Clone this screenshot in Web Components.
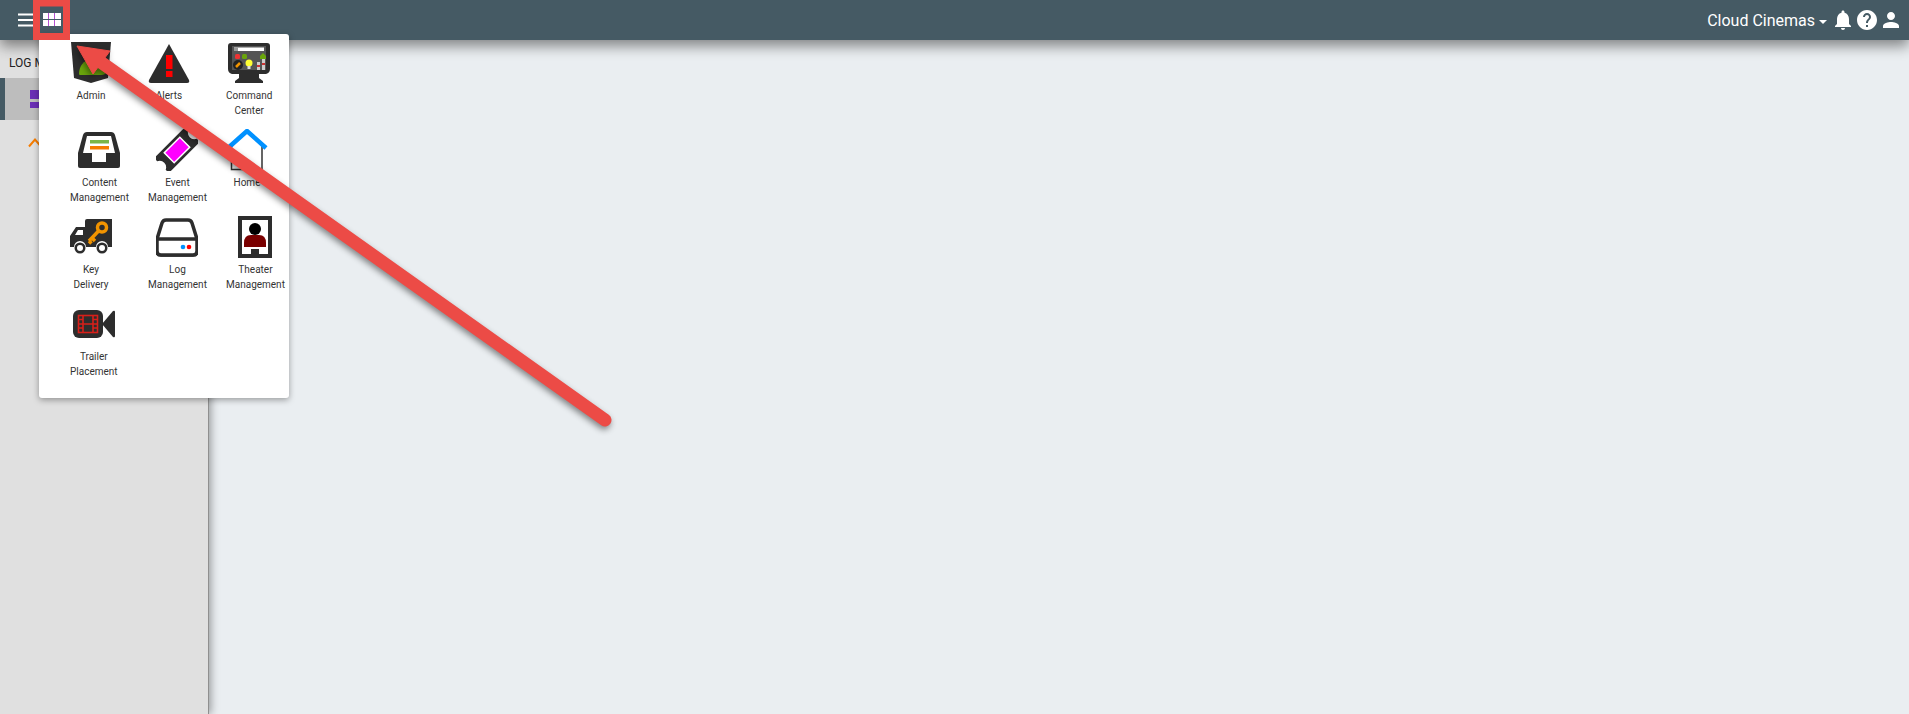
<!DOCTYPE html>
<html>
<head>
<meta charset="utf-8">
<title>Log Management</title>
<style>
  html, body { margin: 0; height: 100%; overflow: hidden; background: #eaeef1; font-family: Roboto, "Liberation Sans", sans-serif; }
</style>
</head>
<body>
<app-shell>
  <app-topbar slot="top" account="Cloud Cinemas"></app-topbar>
  <app-sidebar slot="side" heading="Log Management"></app-sidebar>
  <app-launcher slot="over">
    <launcher-item icon="admin">Admin</launcher-item>
    <launcher-item icon="alerts">Alerts</launcher-item>
    <launcher-item icon="command">Command<br>Center</launcher-item>
    <launcher-item icon="content">Content<br>Management</launcher-item>
    <launcher-item icon="event">Event<br>Management</launcher-item>
    <launcher-item icon="home">Home</launcher-item>
    <launcher-item icon="key">Key<br>Delivery</launcher-item>
    <launcher-item icon="log">Log<br>Management</launcher-item>
    <launcher-item icon="theater">Theater<br>Management</launcher-item>
    <launcher-item icon="trailer">Trailer<br>Placement</launcher-item>
  </app-launcher>
  <callout-arrow slot="over"></callout-arrow>
</app-shell>

<script>
// all launcher icons share a 42x42 box
const ICONS = {
  admin: `
    <path d="M1 0H41L38 36L21 41L4 36Z" fill="#2d2d2d"/>
    <path d="M9 32C9 24 14 18 20 18C28 18 36 24 36 30C36 32 34 33 31 33H12C10 33 9 33 9 32Z" fill="#6aa50c"/>`,
  alerts: `
    <path d="M21 2L41 38Q42 41 39 41H3Q0 41 1 38Z" fill="#2d2d2d"/>
    <rect x="18" y="13" width="6.500" height="14" fill="#f00"/>
    <rect x="18" y="29" width="6.500" height="6" fill="#f00"/>`,
  command: `
    <path d="M3 1H39Q42 1 42 4V27Q42 31 38 32H31V36L35 39V41H7V39L11 36V32H4Q0 31 0 27V4Q0 1 3 1Z" fill="#2d2d2d"/>
    <rect x="4" y="4" width="34" height="24" fill="#555"/>
    <rect x="6" y="5.500" width="30" height="3.500" fill="#fff"/>
    <rect x="6" y="5.500" width="4" height="3.500" fill="#999"/>
    <rect x="7" y="12" width="5" height="5" rx="1.500" fill="#e33"/>
    <rect x="14" y="12" width="5" height="5" rx="1.500" fill="#6aa50c"/>
    <path d="M35 11L38 14V17H32V14Z" fill="#6aa50c"/>
    <circle cx="10" cy="23" r="5" fill="#222"/>
    <path d="M8 25L12 21" stroke="#f29400" stroke-width="2.500"/>
    <circle cx="21" cy="21" r="3.500" fill="#ff3"/>
    <rect x="19.500" y="24" width="3" height="3" fill="#ddd"/>
    <rect x="29" y="20" width="3" height="8" fill="#ccc"/>
    <rect x="34" y="17" width="3" height="11" fill="#ccc"/>
    <rect x="29" y="23" width="3" height="2" fill="#c33"/>
    <rect x="34" y="21" width="3" height="2" fill="#c33"/>`,
  content: `
    <path d="M9 3H33Q36 3 37 6L42 24V37Q42 39 40 39H2Q0 39 0 37V24L5 6Q6 3 9 3Z" fill="#2d2d2d"/>
    <path d="M9 7H33L37 24H28V33H14V24H5Z" fill="#fff"/>
    <rect x="12" y="11" width="19" height="3.500" fill="#7ab648"/>
    <rect x="12" y="17" width="19" height="3.500" fill="#f57c00"/>`,
  event: `
    <g transform="rotate(-45 21 21)">
      <path d="M-1 10.500H43V15Q39 17 39 21Q39 25 43 27V31.500H-1V27Q3 25 3 21Q3 17 -1 15Z" fill="#2d2d2d"/>
      <rect x="10" y="14" width="22" height="14" fill="#f0f" stroke="#fff" stroke-width="1.500"/>
    </g>`,
  home: `
    <path d="M5.500 17V40.500H36V17" fill="none" stroke="#333" stroke-width="1.500"/>
    <path d="M2 19L21 2L40 19" fill="none" stroke="#0091ff" stroke-width="4.500"/>`,
  key: `
    <path d="M17 3H42V31H38A6 6 0 0 0 26 31H16A6 6 0 0 0 4 31H0V20L6 11H15V5Q15 3 17 3Z" fill="#2d2d2d"/>
    <path d="M5 19L8 14H13V19Z" fill="#fff"/>
    <circle cx="10" cy="32" r="5.500" fill="#2d2d2d"/><circle cx="10" cy="32" r="3" fill="#fff"/>
    <circle cx="32" cy="32" r="5.500" fill="#2d2d2d"/><circle cx="32" cy="32" r="3" fill="#fff"/>
    <g fill="none" stroke="#f29400" stroke-width="3.500">
      <circle cx="32" cy="11.500" r="4.500"/>
      <path d="M28.500 15L19 25M22 22L25 25M19 25L21.500 27.500"/>
    </g>`,
  log: `
    <path d="M10 4H32Q35 4 36 7L41 23V35Q41 39 37 39H5Q1 39 1 35V23L6 7Q7 4 10 4Z" fill="none" stroke="#2d2d2d" stroke-width="3.500"/>
    <path d="M1 23H41V35Q41 39 37 39H5Q1 39 1 35Z" fill="#fff" stroke="#2d2d2d" stroke-width="3.500"/>
    <circle cx="27" cy="31" r="2.300" fill="#0091ff"/>
    <circle cx="33" cy="31" r="2.300" fill="#f00"/>`,
  theater: `
    <rect x="6" y="2" width="30" height="38" fill="#fff" stroke="#2d2d2d" stroke-width="4"/>
    <circle cx="21" cy="13" r="6" fill="#000"/>
    <path d="M10 27Q10 19 17 19H25Q32 19 32 27V31H10Z" fill="#7a0000"/>
    <rect x="17" y="33" width="8" height="6" fill="#2d2d2d"/>`,
  trailer: `
    <rect x="0" y="7" width="30" height="28" rx="6" fill="#2d2d2d"/>
    <path d="M29 21L40 8Q42 7 42 9V33Q42 35 40 34Z" fill="#2d2d2d"/>
    <g fill="none" stroke="#d8201a" stroke-width="1.600">
      <rect x="5.500" y="12.500" width="19" height="17"/>
      <path d="M10 12.500V29.500M20 12.500V29.500M10 21H20M5.500 16.500H10M5.500 21H10M5.500 25H10M20 16.500H24.500M20 21H24.500M20 25H24.500"/>
    </g>`
};

class AppShell extends HTMLElement {
  connectedCallback() {
    this.attachShadow({ mode: 'open' });
    this.shadowRoot.innerHTML = `
      <style>
        :host { display: block; position: relative; width: 1909px; height: 714px; overflow: hidden; }
        .frame { display: flex; flex-direction: column; height: 100%; }
        .body { flex: 1; display: flex; min-height: 0; }
        main { flex: 1; background: #eaeef1; }
      </style>
      <div class="frame">
        <slot name="top"></slot>
        <div class="body">
          <slot name="side"></slot>
          <main></main>
        </div>
      </div>
      <slot name="over"></slot>
    `;
  }
}

class AppTopbar extends HTMLElement {
  connectedCallback() {
    this.attachShadow({ mode: 'open' });
    this.shadowRoot.innerHTML = `
      <style>
        :host {
          display: flex;
          align-items: center;
          justify-content: space-between;
          position: relative;
          z-index: 2;
          height: 40px;
          flex: none;
          background: #455a64;
          color: #fff;
          box-shadow: 0 6px 14px rgba(0, 0, 0, 0.45);
        }
        .left { display: flex; align-items: center; padding-left: 14px; }
        .right { display: flex; align-items: center; padding-right: 6px; }
        .account { font-size: 16px; }
        .caret { width: 0; height: 0; margin: 3px 4px 0 4px; border: 4px solid transparent; border-top-color: #fff; border-bottom: 0; }
        svg { display: block; fill: #fff; }
      </style>
      <div class="left">
        <svg width="24" height="24" viewBox="0 0 24 24" style="margin-right:2px"><path d="M4 18.500h15v-2H4zM4 13h15v-2H4zM4 7.500h15v-2H4z"/></svg>
        <svg width="24" height="24" viewBox="0 0 24 24">
          <rect x="3" y="5" width="18" height="13"/>
          <path d="M8.500 5v13M14.500 5v13" stroke="#b450d2" stroke-width="1" fill="none"/>
          <path d="M3 11.500h18" stroke="#455a64" stroke-width="1" fill="none"/>
        </svg>
      </div>
      <div class="right">
        <span class="account">${this.getAttribute('account')}</span>
        <span class="caret"></span>
        <svg width="24" height="24" viewBox="0 0 24 24"><path d="M12 22c1.100 0 2-.9 2-2h-4c0 1.100.89 2 2 2zm6-6v-5c0-3.070-1.640-5.640-4.500-6.320V4c0-.83-.67-1.500-1.500-1.500s-1.500.67-1.500 1.500v.68C7.630 5.360 6 7.920 6 11v5l-2 2v1h16v-1l-2-2z"/></svg>
        <svg width="24" height="24" viewBox="0 0 24 24"><path d="M12 2C6.480 2 2 6.480 2 12s4.480 10 10 10 10-4.480 10-10S17.520 2 12 2zm1 17h-2v-2h2v2zm2.070-7.750l-.9.920C13.450 12.900 13 13.500 13 15h-2v-.5c0-1.100.45-2.100 1.170-2.830l1.240-1.260c.37-.36.59-.86.59-1.410 0-1.100-.9-2-2-2s-2 .9-2 2H8c0-2.210 1.790-4 4-4s4 1.790 4 4c0 .88-.36 1.680-.93 2.250z"/></svg>
        <svg width="24" height="24" viewBox="0 0 24 24"><path d="M12 12c2.210 0 4-1.790 4-4s-1.790-4-4-4-4 1.790-4 4 1.790 4 4 4zm0 2c-2.670 0-8 1.340-8 4v2h16v-2c0-2.660-5.330-4-8-4z"/></svg>
      </div>
    `;
  }
}

class AppSidebar extends HTMLElement {
  connectedCallback() {
    this.attachShadow({ mode: 'open' });
    this.shadowRoot.innerHTML = `
      <style>
        :host {
          display: block;
          position: relative;
          z-index: 1;
          flex: none;
          box-sizing: border-box;
          width: 209px;
          background: #e0e0e0;
          border-right: 1px solid #8f8f8f;
          box-shadow: 2px 0 8px rgba(0, 0, 0, 0.35);
        }
        .heading { height: 38px; line-height: 46px; padding-left: 9px; font-size: 12px; text-transform: uppercase; color: #212121; }
        .row { display: flex; align-items: center; height: 42px; padding-left: 25px; box-sizing: border-box; }
        .row.active { background: #bdbdbd; border-left: 5px solid #455a64; }
        .row.next { padding: 4px 0 0 28px; height: 40px; }
        svg { display: block; }
      </style>
      <div class="heading">${this.getAttribute('heading')}</div>
      <div class="row active">
        <svg width="20" height="20" viewBox="0 0 20 20" fill="#6a2fb5"><path d="M0 1h9v9H0zM0 13h9v6H0zM11 1h9v6h-9zM11 9h9v10h-9z"/></svg>
      </div>
      <div class="row next">
        <svg width="14" height="11" viewBox="0 0 14 11" fill="none" stroke="#f57c00" stroke-width="2"><path d="M1 9.500L7 2.500L13 9.500"/></svg>
      </div>
    `;
  }
}

class AppLauncher extends HTMLElement {
  connectedCallback() {
    this.attachShadow({ mode: 'open' });
    this.shadowRoot.innerHTML = `
      <style>
        :host {
          display: block;
          position: absolute;
          z-index: 3;
          left: 39px;
          top: 34px;
          width: 250px;
          height: 364px;
          background: #fff;
          border-radius: 3px;
          box-shadow: 0 2px 6px rgba(0, 0, 0, 0.35);
        }
        .grid {
          display: grid;
          grid-template-columns: 78px 78px 63px;
          grid-auto-rows: 87px;
          justify-items: start;
          padding: 8px 0 0 31px;
        }
      </style>
      <div class="grid"><slot></slot></div>
    `;
  }
}

class LauncherItem extends HTMLElement {
  connectedCallback() {
    this.attachShadow({ mode: 'open' });
    this.shadowRoot.innerHTML = `
      <style>
        :host { display: flex; flex-direction: column; align-items: center; min-width: 42px; text-align: center; font-size: 10px; line-height: 15px; color: #333; white-space: nowrap; }
        svg { display: block; margin-bottom: 4px; }
      </style>
      <svg width="42" height="42" viewBox="0 0 42 42">${ICONS[this.getAttribute('icon')]}</svg>
      <div><slot></slot></div>
    `;
  }
}

class CalloutArrow extends HTMLElement {
  connectedCallback() {
    this.attachShadow({ mode: 'open' });
    this.shadowRoot.innerHTML = `
      <style>
        :host { position: absolute; inset: 0; z-index: 4; pointer-events: none; }
        svg { display: block; overflow: visible; }
        .arrow { filter: drop-shadow(-1px 3px 3px rgba(0, 0, 0, 0.45)); }
      </style>
      <svg width="1909" height="714" viewBox="0 0 1909 714">
        <g class="arrow" fill="#ec4b46" stroke="#ec4b46">
          <line x1="605" y1="420" x2="95" y2="58" stroke-width="13" stroke-linecap="round"/>
          <polygon points="77,46 110,51 93,74" stroke-width="1"/>
        </g>
        <rect x="36.500" y="3" width="30" height="33.500" fill="none" stroke="#ec4b46" stroke-width="7"/>
      </svg>
    `;
  }
}

customElements.define('app-shell', AppShell);
customElements.define('app-topbar', AppTopbar);
customElements.define('app-sidebar', AppSidebar);
customElements.define('app-launcher', AppLauncher);
customElements.define('launcher-item', LauncherItem);
customElements.define('callout-arrow', CalloutArrow);
</script>
</body>
</html>
